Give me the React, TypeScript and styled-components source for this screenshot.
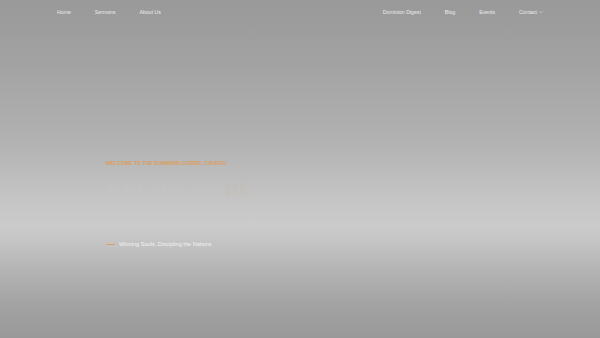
import styled, { createGlobalStyle } from 'styled-components';

const GlobalStyle = createGlobalStyle`
  html, body {
    margin: 0;
    padding: 0;
  }
  body {
    font-family: 'Liberation Sans', Arial, sans-serif;
  }
`;

const Page = styled.div`
  width: 100%;
  height: 338px;
  display: flex;
  flex-direction: column;
  overflow: hidden;
  background: linear-gradient(
    180deg,
    #999999 0%,
    #a2a2a2 18%,
    #b2b2b2 42%,
    #c4c4c4 58%,
    #cbcbcb 67%,
    #c3c3c3 72%,
    #b4b4b4 80%,
    #a3a3a3 90%,
    #999999 100%
  );
`;

const Header = styled.nav`
  display: flex;
  justify-content: space-between;
  align-items: center;
  height: 24px;
  padding: 0 57px;
`;

const NavGroup = styled.div`
  display: flex;
  align-items: center;
  gap: 24px;
`;

const NavLink = styled.a`
  color: #ececec;
  font-size: 5.2px;
  line-height: 6px;
  text-decoration: none;
  display: flex;
  align-items: center;
  gap: 2px;
`;

const Hero = styled.section`
  display: flex;
  flex-direction: column;
  align-items: flex-start;
  padding: 136px 0 0 106px;
`;

const Eyebrow = styled.p`
  margin: 0;
  color: #dc9d5c;
  font-size: 5.1px;
  line-height: 6px;
  font-weight: 700;
  text-transform: uppercase;
`;

const Heading = styled.h1`
  margin: 14px 0 0;
  font-size: 19px;
  line-height: 19px;
  font-weight: 700;
  color: rgba(255, 255, 255, 0.035);
`;

const Accent = styled.span`
  color: rgba(220, 157, 92, 0.07);
`;

const Tagline = styled.div`
  display: flex;
  align-items: center;
  gap: 4px;
  margin-top: 42px;
`;

const Dash = styled.span`
  width: 9px;
  height: 1px;
  background: #d9a068;
`;

const TaglineText = styled.span`
  color: #f2f2f2;
  font-size: 5.6px;
  line-height: 7px;
`;

const Chevron = () => (
  <svg width="4" height="4" viewBox="0 0 10 10" fill="none">
    <path d="M2 3.5 L5 6.5 L8 3.5" stroke="#ececec" strokeWidth="1.6" />
  </svg>
);

const App = () => {
  const left = ['Home', 'Sermons', 'About Us'];
  const right = ['Dominion Digest', 'Blog', 'Events'];

  return (
    <Page>
      <GlobalStyle />
      <Header>
        <NavGroup>
          {left.map((item) => (
            <NavLink key={item}>{item}</NavLink>
          ))}
        </NavGroup>
        <NavGroup>
          {right.map((item) => (
            <NavLink key={item}>{item}</NavLink>
          ))}
          <NavLink>
            Contact
            <Chevron />
          </NavLink>
        </NavGroup>
      </Header>
      <Hero>
        <Eyebrow>Welcome to the Dominion Gospel Church</Eyebrow>
        <Heading>
          A PLACE TO <Accent>BE</Accent>
        </Heading>
        <Tagline>
          <Dash />
          <TaglineText>Winning Souls, Discipling the Nations</TaglineText>
        </Tagline>
      </Hero>
    </Page>
  );
};

export default App;
